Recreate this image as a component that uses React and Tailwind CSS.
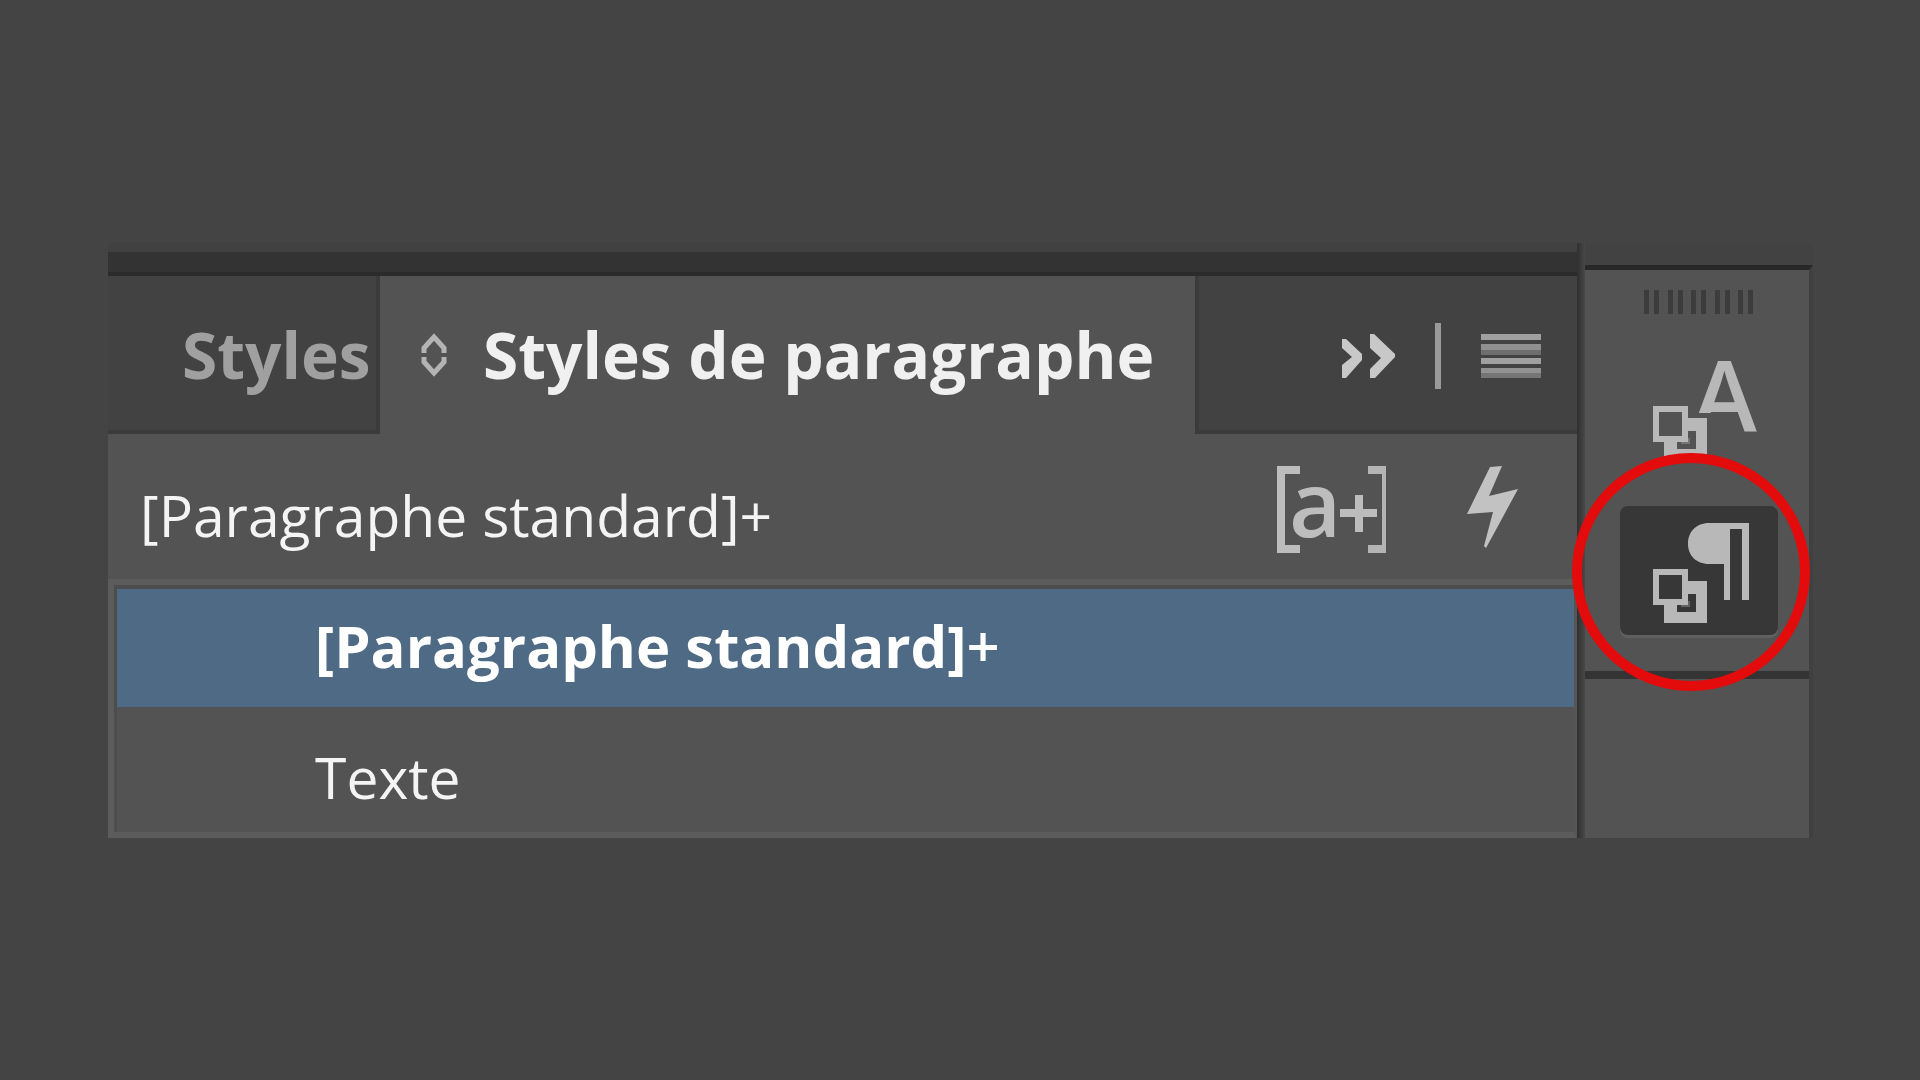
import React from 'react';
import clsx from 'clsx';

const paragraphStyles = [
  { name: '[Paragraphe standard]', overridden: true, selected: true },
  { name: 'Texte', overridden: false, selected: false },
];

const SortIcon = () => (
  <svg className="h-11 w-[26px] shrink-0" viewBox="0 0 26 44" fill="none" stroke="#b4b4b4" strokeWidth="5">
    <path d="M3 20V15L13 4L23 15V20" />
    <path d="M3 24V29L13 40L23 29V24" />
  </svg>
);

const CollapseIcon = () => (
  <svg className="h-11 w-[54px]" viewBox="0 0 54 44" fill="#c8c8c8">
    <path d="M1 5H5L21 20V26L5 44H1V31L11 23L1 14Z" />
    <path d="M29 0H33L54 20V23L34 44H29V35L40 24L29 14Z" />
  </svg>
);

const MenuIcon = () => (
  <svg className="h-11 w-15" viewBox="0 0 60 44">
    <rect y="0" width="60" height="6" fill="#a0a0a0" />
    <rect y="10" width="60" height="6" fill="#8f8f8f" />
    <rect y="16" width="60" height="5" fill="#6e6e6e" />
    <rect y="24" width="60" height="6" fill="#a0a0a0" />
    <rect y="34" width="60" height="5" fill="#929292" />
    <rect y="39" width="60" height="5" fill="#757575" />
  </svg>
);

const OverrideIcon = () => (
  <svg className="h-[88px] w-[110px] overflow-visible" viewBox="0 0 110 88">
    <path d="M0 0H23V8H8V79H23V87H0Z" fill="#bdbdbd" />
    <path d="M91 0H109V87H91V79H105V8H91Z" fill="#b4b4b4" />
    <text x="12" y="71" fill="#bdbdbd" className="font-['Open_Sans',sans-serif] text-[90px] font-semibold">a</text>
    <path d="M63 47H100M82 29V66" stroke="#bdbdbd" strokeWidth="8" />
  </svg>
);

const BoltIcon = () => (
  <svg className="h-[84px] w-[52px]" viewBox="0 0 52 84" fill="#c2c2c2">
    <path d="M23 1L35 0L22 30L51 23L31 60L19 82L17 80L26 46L0 48Z" />
  </svg>
);

const LinkedSquares = ({ hole }) => (
  <>
    <path d="M11 58H54V100H11Z" fill="#b8b8b8" />
    <path d="M24 71H43V89H24Z" fill={hole} />
    <path d="M32 78H37V84H28V81H32Z" fill="#b8b8b8" opacity="0.35" />
    <path d="M0 46H35V82H0Z" fill="#b8b8b8" />
    <path d="M6 52H29V76H6Z" fill={hole} />
  </>
);

const CharacterStylesIcon = () => (
  <svg className="h-25 w-24 overflow-visible" viewBox="0 0 96 100">
    <text x="39" y="71" fill="#b8b8b8" className="font-['Open_Sans',sans-serif] text-[98px] font-semibold">A</text>
    <path d="M36 53H61V72H36Z" fill="#535353" />
    <LinkedSquares hole="#535353" />
  </svg>
);

const ParagraphStylesIcon = () => (
  <svg className="h-25 w-24" viewBox="0 0 96 100">
    <path d="M56 0H96V77H89V6H77V77H71V41H56C43 41 35 32 35 21C35 9 43 0 56 0Z" fill="#b8b8b8" />
    <LinkedSquares hole="#373737" />
  </svg>
);

const Grip = () => (
  <svg className="h-6 w-[110px]" viewBox="0 0 110 24" fill="#3c3c3c">
    {[0, 24, 47, 71, 94].map((x) => (
      <React.Fragment key={x}>
        <rect x={x} width="5" height="24" />
        <rect x={x + 10} width="5" height="24" />
      </React.Fragment>
    ))}
  </svg>
);

const StylesPanel = () => (
  <section className="flex min-w-0 flex-1 flex-col bg-[#535353]">
    <div className="h-[9px] bg-[#414141]" />
    <div className="h-6 border-b-4 border-[#2b2b2b] bg-[#333333]" />

    {/* Tabs */}
    <div className="flex h-[158px] items-stretch text-[64px] leading-none font-bold">
      <button className="w-[272px] shrink-0 border-r-4 border-b-4 border-[#3b3b3b] bg-[#424242] pt-1 pl-[74px] text-left text-[#a0a0a0]">
        Styles
      </button>
      <button className="flex min-w-0 grow items-center gap-9 pl-[41px] text-left whitespace-nowrap text-[#f0f0f0]">
        <SortIcon />
        Styles de paragraphe
      </button>
      <div className="flex w-[382px] shrink-0 items-center justify-end border-b-4 border-l-4 border-[#3b3b3b] bg-[#424242] pt-1.5 pr-9">
        <button aria-label="Réduire">
          <CollapseIcon />
        </button>
        <div className="mr-10 ml-10 h-[66px] w-1.5 bg-[#9a9a9a]" />
        <button aria-label="Menu">
          <MenuIcon />
        </button>
      </div>
    </div>

    {/* Current style */}
    <div className="flex h-[145px] items-center pr-[58px] pl-8">
      <span className="grow pt-[18px] text-[57px] leading-none whitespace-nowrap text-[#f4f4f4]">
        [Paragraphe standard]+
      </span>
      <div className="flex items-center gap-20 pt-2">
        <button aria-label="Mettre en évidence">
          <OverrideIcon />
        </button>
        <button aria-label="Effacer" className="pb-1">
          <BoltIcon />
        </button>
      </div>
    </div>

    <ul className="border-[6px] border-r-3 border-[#5c5c5c] border-r-[#555555] leading-none text-[#f4f4f4]">
      {paragraphStyles.map((style) => (
        <li key={style.name}>
          <button
            className={clsx(
              'block w-full border-l-3 border-[#4d4d4d] pl-[198px] text-left leading-none whitespace-nowrap',
              style.selected
                ? 'h-[122px] border-t-4 bg-[#4f6a84] pb-1 text-[58px] font-bold text-white'
                : 'h-[125px] pt-4 text-[57px]'
            )}
          >
            {style.name}
            {style.overridden && <span className="font-semibold">+</span>}
          </button>
        </li>
      ))}
    </ul>
  </section>
);

const Dock = () => (
  <aside className="flex w-[228px] shrink-0 flex-col">
    <div className="h-[22px] bg-[#424242]" />
    <div className="flex grow flex-col border-t-5 border-r-4 border-t-[#282828] border-r-[#404040] bg-[#535353]">
      <div className="flex flex-col items-center border-b-8 border-[#343434] pt-5 pb-9 pl-1">
        <Grip />
        <button aria-label="Styles de caractère" className="mt-10 flex h-32 w-[158px] justify-center pt-1.5 pl-1">
          <CharacterStylesIcon />
        </button>
        <div className="relative mt-6">
          <button
            aria-label="Styles de paragraphe"
            className="flex h-[129px] w-[158px] items-end justify-center rounded-lg bg-[#373737] pb-3 pl-1 shadow-[0_3px_0_#606060]"
          >
            <ParagraphStylesIcon />
          </button>
          <span className="pointer-events-none absolute -top-[53px] -left-12 size-[238px] rounded-full border-10 border-[#e30b0b]" />
        </div>
      </div>
    </div>
  </aside>
);

const App = () => (
  <main className="flex min-h-screen items-center bg-[#444444] pr-[107px] pl-[108px] font-['Open_Sans',sans-serif]">
    <div className="flex w-full">
      <StylesPanel />
      <div className="w-2 shrink-0 bg-linear-to-r from-[#303030] to-[#484848]" />
      <Dock />
    </div>
  </main>
);

export default App;
